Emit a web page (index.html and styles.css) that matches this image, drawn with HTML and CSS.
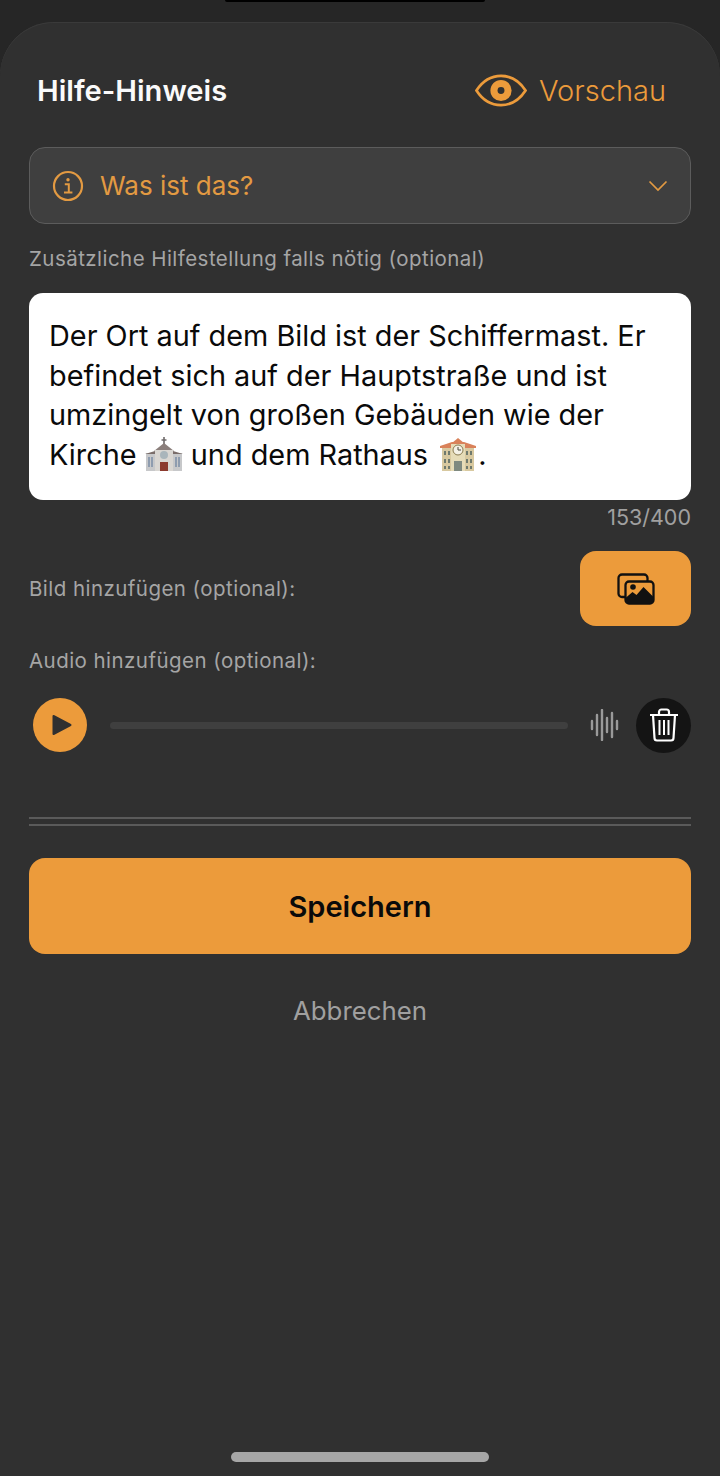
FILE: index.html
```html
<!DOCTYPE html>
<html lang="de">
<head>
<meta charset="utf-8">
<title>Hilfe-Hinweis</title>
<link rel="stylesheet" href="styles.css">
</head>
<body>
<div class="notch"></div>
<main class="sheet">
  <header class="head">
    <h1 class="title">Hilfe-Hinweis</h1>
    <div class="preview">
      <svg class="eye" viewBox="0 0 54 34" width="52" height="33"><path d="M1.500 17C8 7 17 1.800 27 1.800S46 7 52.500 17C46 27 37 32.200 27 32.200S8 27 1.500 17Z" fill="none" stroke="#ec9b3b" stroke-width="2.800"/><circle cx="27" cy="17" r="11" fill="#ec9b3b"/><circle cx="27" cy="17" r="3.600" fill="#303030"/></svg>
      <span>Vorschau</span>
    </div>
  </header>
  <div class="select">
    <svg class="info" viewBox="0 0 32 32" width="32" height="32"><circle cx="16" cy="16" r="14" fill="none" stroke="#e39a42" stroke-width="2.200"/><circle cx="16" cy="9.800" r="1.700" fill="#e39a42"/><path d="M12.800 14.200h4v8M12 22.600h8.400" fill="none" stroke="#e39a42" stroke-width="2"/></svg>
    <span class="select-text">Was ist das?</span>
    <svg class="chev" viewBox="0 0 20 12" width="20" height="12"><path d="M1.500 1.500L10 10l8.500-8.500" fill="none" stroke="#e39a42" stroke-width="1.700"/></svg>
  </div>
  <p class="label label-help">Zusätzliche Hilfestellung falls nötig (optional)</p>
  <div class="textbox">Der Ort auf dem Bild ist der Schiffermast. Er befindet sich auf der Hauptstraße und ist umzingelt von großen Gebäuden wie der Kirche <svg class="emoji" viewBox="0 0 38 34" width="38" height="34"><path d="M19 0v8M16.500 3h5" stroke="#6f6a6a" stroke-width="1.600"/><path d="M9 14L19 6l10 8z" fill="#8b7f7c"/><rect x="10" y="13" width="18" height="21" fill="#d9d6d2"/><rect x="1" y="16" width="9" height="18" fill="#c7c8ca"/><rect x="28" y="16" width="9" height="18" fill="#c7c8ca"/><path d="M0 17l10-3v3zM38 17l-10-3v3z" fill="#7a6d6a"/><circle cx="19" cy="18" r="4" fill="#a9b5bb"/><rect x="15" y="25" width="8" height="9" fill="#8c3a2e"/><path d="M4 20v10M7 20v10M31 20v10M34 20v10" stroke="#8092a8" stroke-width="1.600"/></svg> und dem Rathaus <svg class="emoji emoji-hall" viewBox="0 0 38 34" width="38" height="34"><path d="M13 6L19 1l6 5z" fill="#d9825a"/><path d="M1 9l12-4h12l12 4v2H1z" fill="#d9825a"/><rect x="3" y="11" width="32" height="23" fill="#d8c9a0"/><rect x="12" y="7" width="14" height="27" fill="#e6dcb8"/><circle cx="19" cy="13" r="5" fill="#f4f1e6" stroke="#8a7b50" stroke-width="1"/><path d="M19 10v3h3" stroke="#4b4b3f" stroke-width="1" fill="none"/><rect x="15" y="24" width="8" height="10" fill="#7f8a80"/><path d="M6 14v4M10 14v4M28 14v4M32 14v4M6 22v4M10 22v4M28 22v4M32 22v4M6 29v3M10 29v3M28 29v3M32 29v3" stroke="#6f7a6e" stroke-width="2"/></svg><span class="dot">.</span></div>
  <p class="counter">153/400</p>
  <div class="image-row">
    <p class="label">Bild hinzufügen (optional):</p>
    <button class="image-btn" type="button" aria-label="Bild hinzufügen">
      <svg viewBox="0 0 38 32" width="38" height="32"><path d="M8 24H5a3.500 3.500 0 0 1-3.500-3.500V5A3.500 3.500 0 0 1 5 1.500h22A3.500 3.500 0 0 1 30.500 5v3" fill="none" stroke="#111" stroke-width="2.300"/><rect x="8.500" y="8.500" width="28" height="22" rx="3.500" fill="#ec9b3b" stroke="#111" stroke-width="2.300"/><path d="M8.500 25l7-6 4 3 7-8 10 10v3a3.500 3.500 0 0 1-3.500 3.500H12A3.500 3.500 0 0 1 8.500 27z" fill="#111"/><circle cx="16" cy="14" r="2.800" fill="#111"/></svg>
    </button>
  </div>
  <p class="label label-audio">Audio hinzufügen (optional):</p>
  <div class="audio">
    <div class="play"><svg viewBox="0 0 20 22" width="20" height="22"><path d="M1.500 2v18l17-9z" fill="#303030" stroke="#303030" stroke-width="2" stroke-linejoin="round"/></svg></div>
    <div class="track"></div>
    <svg class="wave" viewBox="0 0 30 32" width="30" height="32"><path d="M3 12v8M8 6v20M13 1v30M18 9v14M23 4v24M28 12v8" stroke="#9a9a9a" stroke-width="2.400" stroke-linecap="round"/></svg>
    <div class="trash"><svg viewBox="0 0 30 34" width="30" height="34"><path d="M1 7h28M10 7V4a2.500 2.500 0 0 1 2.500-2.500h5A2.500 2.500 0 0 1 20 4v3M4 7l1.500 23a2.500 2.500 0 0 0 2.500 2.500h14a2.500 2.500 0 0 0 2.500-2.500L26 7" fill="none" stroke="#fff" stroke-width="2.200"/><path d="M10.500 12v15M15 12v15M19.500 12v15" stroke="#fff" stroke-width="2"/></svg></div>
  </div>
  <div class="rules"></div>
  <button class="save" type="button">Speichern</button>
  <p class="cancel">Abbrechen</p>
  <div class="home"></div>
</main>
</body>
</html>
```
FILE: styles.css
```css
* { box-sizing: border-box; }
html, body { margin: 0; height: 1476px; overflow: hidden; }
body { background: #262626; font-family: Inter, "Liberation Sans", sans-serif; position: relative; padding-top: 22px; }
p, h1 { margin: 0; }
.notch { position: absolute; top: 0; left: 225px; width: 260px; height: 2px; background: #000; border-radius: 0 0 6px 6px; }
.sheet { height: 1454px; background: #303030; border-radius: 54px 54px 0 0; padding: 0 29px; display: flex; flex-direction: column; box-shadow: inset 0 1px 0 #3a3a3a; }
.head { display: flex; justify-content: space-between; align-items: center; height: 68px; margin-top: 34px; padding: 0 25px 0 8px; }
.title { font-size: 29.100px; font-weight: 600; color: #fafafa; }
.preview { display: flex; align-items: center; gap: 12px; color: #ec9b3b; font-size: 29px; font-weight: 300; }
.eye { display: block; }
.select { margin-top: 23px; height: 77px; border: 1.500px solid #5c5c5c; border-radius: 16px; background: #3f3f3f; display: flex; align-items: center; padding: 0 22px; }
.info { flex: none; }
.select-text { margin-left: 16px; font-size: 26px; color: #e39a42; flex: 1; }
.label { font-size: 20.500px; color: #a5a5a5; line-height: 28px; letter-spacing: 0.450px; font-weight: 400; }
.label-help { margin: 21px 0 0; }
.textbox { margin-top: 20px; height: 207px; background: #fff; border-radius: 14px; padding: 23px 20px 0; font-size: 28.850px; line-height: 39.600px; color: #0a0a0a; }
.emoji { vertical-align: -6px; }
.emoji-hall { margin-left: 3px; }
.dot { margin-left: 1px; }
.counter { text-align: right; font-size: 21.500px; color: #a0a0a0; line-height: 28px; margin-top: 3px; }
.image-row { display: flex; justify-content: space-between; align-items: center; margin-top: 20px; }
.image-btn { width: 111px; height: 75px; border: 0; padding: 0; background: #ec9b3b; border-radius: 16px; display: flex; align-items: center; justify-content: center; }
.label-audio { margin-top: 21px; }
.audio { display: flex; align-items: center; margin-top: 22px; height: 56px; }
.play { width: 54px; height: 54px; margin-left: 4px; border-radius: 50%; background: #ec9b3b; display: flex; align-items: center; justify-content: center; padding-left: 4px; }
.track { flex: 1; height: 7px; margin: 0 21px 0 23px; background: #3f3f3f; border-radius: 4px; }
.wave { flex: none; }
.trash { width: 55px; height: 55px; margin-left: 17px; border-radius: 50%; background: #141414; display: flex; align-items: center; justify-content: center; flex: none; }
.rules { margin-top: 64px; height: 9px; border-top: 2px solid #5a5a5a; border-bottom: 2px solid #5a5a5a; flex: none; }
.save { margin-top: 32px; height: 96px; border: 0; background: #ec9b3b; border-radius: 16px; font: 600 29px Inter, "Liberation Sans", sans-serif; color: #0a0a0a; flex: none; }
.cancel { margin-top: 39px; text-align: center; font-size: 25.800px; color: #a0a0a0; line-height: 36px; }
.home { position: absolute; left: 231px; top: 1452px; width: 258px; height: 10px; background: #a6a6a6; border-radius: 5px; }
```
